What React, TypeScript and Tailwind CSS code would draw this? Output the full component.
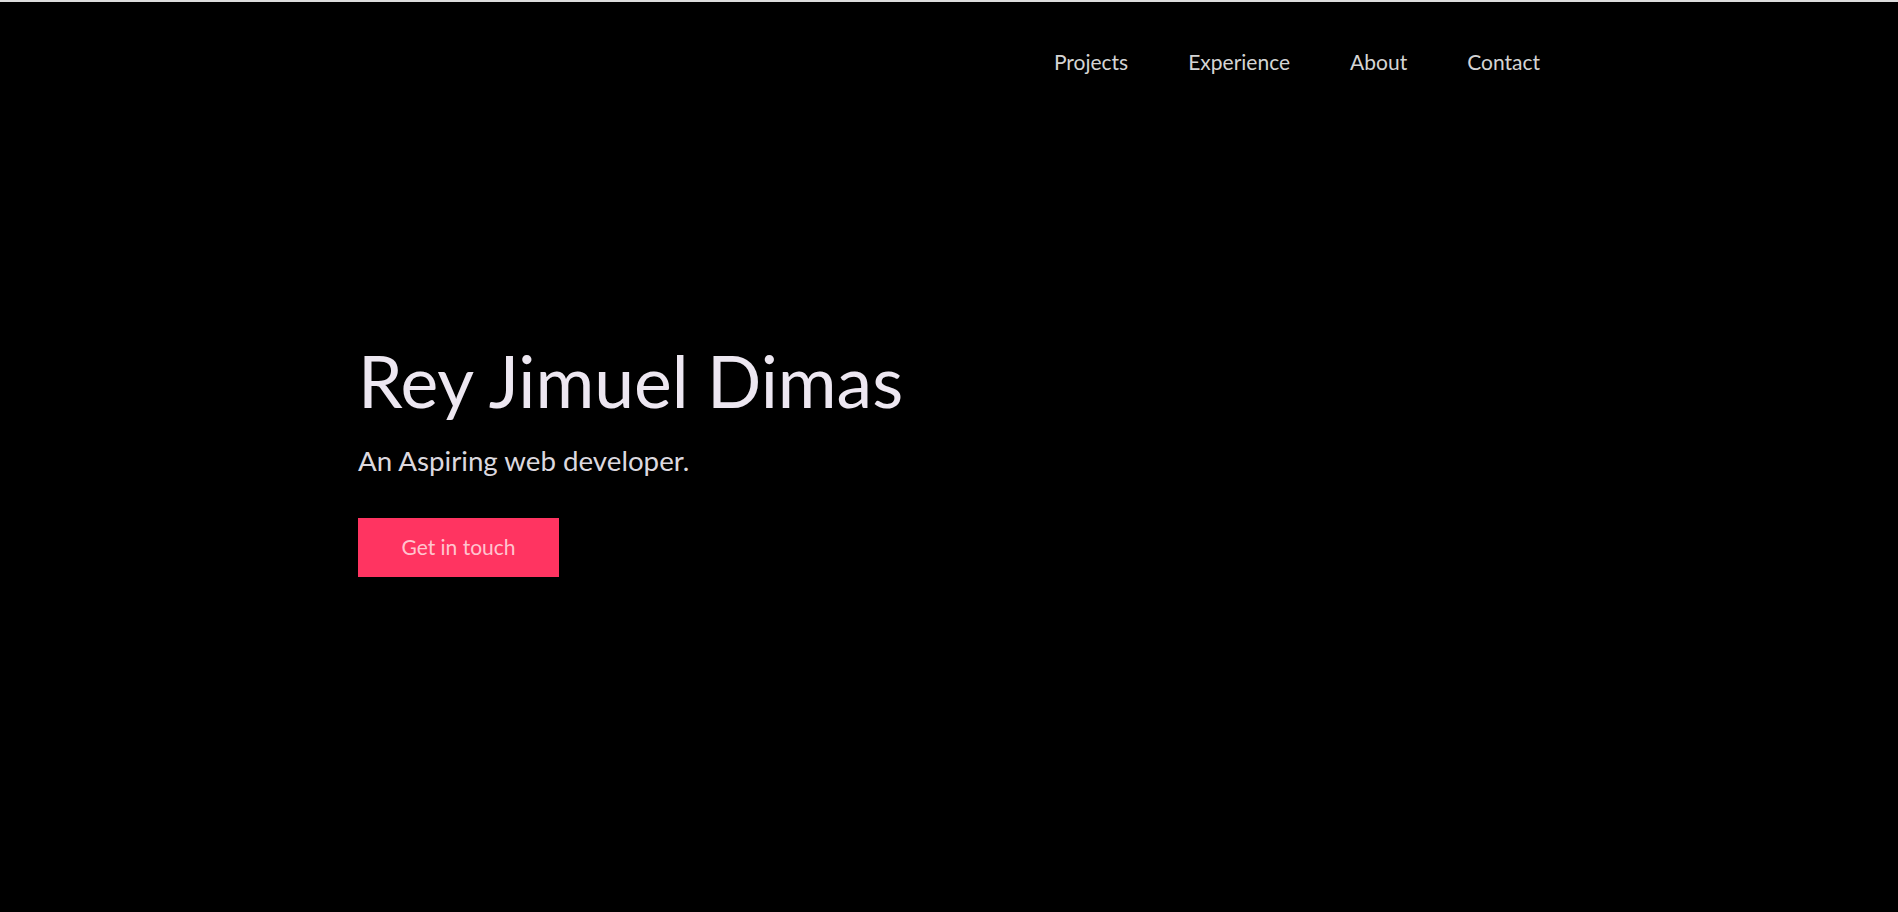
export default function App() {
  return (
    <div className="min-h-[912px] bg-black border-t-2 border-[#dcdcdc] font-['Lato',sans-serif]">
      {/* Nav */}
      <header className="mx-auto w-[1182px] flex justify-end pt-[44px]">
        <nav className="flex gap-[60px] text-[21px] text-[#d4d4d4]">
          <a href="#projects">Projects</a>
          <a href="#experience">Experience</a>
          <a href="#about">About</a>
          <a href="#contact">Contact</a>
        </nav>
      </header>

      {/* Hero */}
      <section className="mx-auto w-[1182px] pt-[267px]">
        <h1 className="text-[71.5px] leading-none font-normal text-[#ede7f1]">
          Rey Jimuel Dimas
        </h1>
        <p className="mt-[24px] text-[27.7px] text-[#dcd8df]">
          An Aspiring web developer.
        </p>
        <button className="mt-[36px] w-[201px] h-[59px] bg-[#ff3461] text-[21px] text-[#ffc4cf]">
          Get in touch
        </button>
      </section>
    </div>
  );
}
